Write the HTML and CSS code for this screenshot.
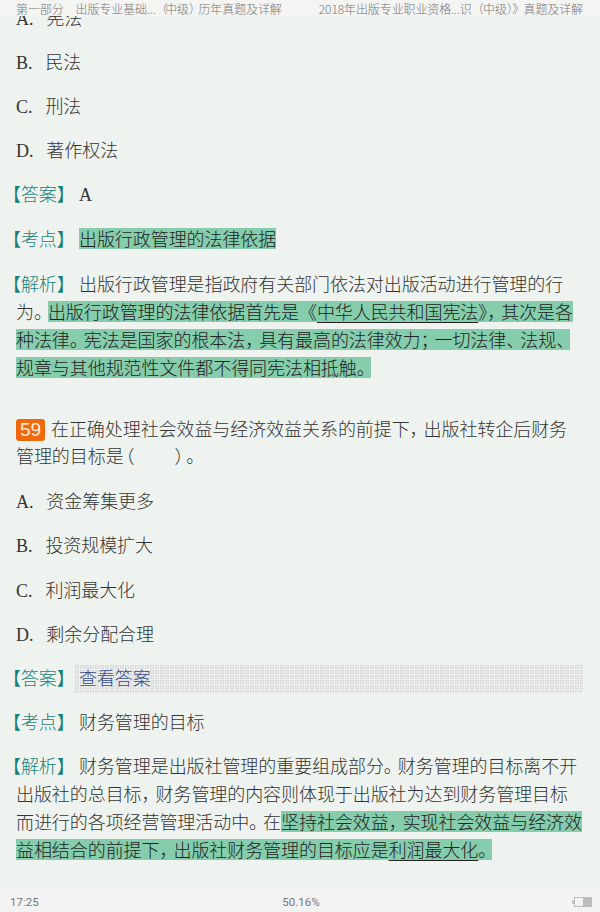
FILE: index.html
```html
<!DOCTYPE html>
<html lang="zh-CN">
<head>
<meta charset="utf-8">
<title>2018年出版专业职业资格考试</title>
<link rel="stylesheet" href="styles.css">
</head>
<body>
<header class="top">
  <span>第一部分　出版专业基础...<span class="pn">（</span>中级<span class="pn">）</span>历年真题及详解</span>
  <span>2018年出版专业职业资格...识<span class="pr">（</span>中级<span class="pr">）》</span>真题及详解</span>
</header>
<main class="page">
  <div class="clip">
    <p class="row"><span class="opt">A.</span>宪法</p>
    <p class="row"><span class="opt">B.</span>民法</p>
    <p class="row"><span class="opt">C.</span>刑法</p>
    <p class="row"><span class="opt">D.</span>著作权法</p>
    <p class="row wide"><span class="tag">【答案】</span><span class="lat">A</span></p>
    <p class="row wide"><span class="tag">【考点】</span><span class="hl">出版行政管理的法律依据</span></p>
    <div class="para">
      <span class="line"><span class="tag">【解析】</span>出版行政管理是指政府有关部门依法对出版活动进行管理的行</span>
      <span class="line">为<span class="p">。</span><span class="hl">出版行政管理的法律依据首先是《<u>中华人民共和国宪法</u>》<span class="p">，</span>其次是各</span></span>
      <span class="line"><span class="hl">种法律<span class="p">。</span>宪法是国家的根本法<span class="p">，</span>具有最高的法律效力<span class="p">；</span>一切法律<span class="p">、</span>法规<span class="p">、</span></span></span>
      <span class="line"><span class="hl">规章与其他规范性文件都不得同宪法相抵触<span class="p">。</span></span></span>
    </div>
    <div class="question">
      <span class="line qhead"><span class="num">59</span>在正确处理社会效益与经济效益关系的前提下<span class="p">，</span>出版社转企后财务</span>
      <span class="line">管理的目标是<span class="open">（</span>　　<span class="close">）</span>。</span>
    </div>
    <p class="row"><span class="opt">A.</span>资金筹集更多</p>
    <p class="row wide"><span class="opt">B.</span>投资规模扩大</p>
    <p class="row"><span class="opt">C.</span>利润最大化</p>
    <p class="row"><span class="opt">D.</span>剩余分配合理</p>
    <p class="row"><span class="tag">【答案】</span><span class="reveal"><span class="link">查看答案</span></span></p>
    <p class="row"><span class="tag">【考点】</span>财务管理的目标</p>
    <div class="para">
      <span class="line"><span class="tag">【解析】</span>财务管理是出版社管理的重要组成部分<span class="p">。</span>财务管理的目标离不开</span>
      <span class="line">出版社的总目标<span class="p">，</span>财务管理的内容则体现于出版社为达到财务管理目标</span>
      <span class="line">而进行的各项经营管理活动中<span class="p">。</span>在<span class="hl">坚持社会效益<span class="p">，</span>实现社会效益与经济效</span></span>
      <span class="line"><span class="hl">益相结合的前提下<span class="p">，</span>出版社财务管理的目标应是<u>利润最大化</u><span class="p">。</span></span></span>
    </div>
  </div>
</main>
<footer class="bottom">
  <span class="time">17:25</span>
  <span class="pct">50.16%</span>
  <svg class="batt" width="20" height="10" viewBox="0 0 20 10" aria-hidden="true">
    <rect x="0" y="3" width="2" height="4" fill="#c4c4c4"/>
    <rect x="2.5" y="0.5" width="17" height="9" fill="none" stroke="#bdbdbd"/>
    <rect x="11" y="1" width="8" height="8" fill="#bdbdbd"/>
  </svg>
</footer>
</body>
</html>
```
FILE: styles.css
```css
* { box-sizing: border-box; }
html, body { margin: 0; height: 100%; }
body {
  width: 600px;
  height: 912px;
  overflow: hidden;
  display: flex;
  flex-direction: column;
  background: #eef3ef;
  color: #333;
  font-family: "Noto Sans CJK SC", "Liberation Sans", sans-serif;
  font-weight: 300;
  font-size: 18px;
}
.top {
  flex: 0 0 16px;
  display: flex;
  justify-content: space-between;
  padding: 0 17px 0 16px;
  background: #f4f4f3;
  color: #777;
  font-size: 12px;
  letter-spacing: -0.1px;
  line-height: 18px;
  white-space: nowrap;
  overflow: hidden;
}
.pn { letter-spacing: -2.5px; }
.pr { letter-spacing: -0.7px; }
.page {
  flex: 1 1 auto;
  min-height: 0;
  overflow: hidden;
  padding: 0 16px;
}
.clip {
  margin-top: -13px;
  letter-spacing: -0.07px;
}
.row {
  margin: 0 0 16px;
  height: 28px;
  line-height: 28px;
  white-space: nowrap;
}
.row.wide { margin-bottom: 17px; }
.opt, .lat {
  font-family: "Liberation Serif", serif;
  font-weight: 400;
}
.opt { margin-right: 13px; }
.tag {
  display: inline-block;
  width: 76px;
  margin-left: -13px;
  color: #1a7f78;
  white-space: nowrap;
}
.p { letter-spacing: -4px; }
.open {
  margin-left: -7px;
  margin-right: 4px;
}
.close { margin-right: 3px; }
.hl {
  display: inline-block;
  height: 21px;
  line-height: 21px;
  background: #85cdac;
  color: #222;
}
.hl u {
  text-decoration: underline;
  text-decoration-color: #222;
  text-decoration-thickness: 1px;
  text-underline-offset: 3px;
}
.para + .question { margin-top: 33px; }
.line {
  display: block;
  height: 28px;
  line-height: 28px;
  white-space: nowrap;
}
.line.qhead { height: 27px; }
.question { margin-bottom: 17px; }
.num {
  display: inline-block;
  width: 29px;
  height: 22px;
  margin-right: 6px;
  border-radius: 3px;
  background: #f0690f;
  color: #ffeedd;
  font-family: "Liberation Sans", sans-serif;
  font-weight: 400;
  font-size: 19px;
  line-height: 22px;
  text-align: center;
}
.reveal {
  display: inline-block;
  vertical-align: top;
  width: 509px;
  height: 29px;
  margin-top: 1px;
  margin-left: -5px;
  padding-left: 5px;
  line-height: 26px;
  background-color: #dcdcdc;
  background-image:
    linear-gradient(to right, #eef3ef 1px, transparent 1px),
    linear-gradient(to bottom, #eef3ef 1px, transparent 1px),
    radial-gradient(circle at 3px 3px, #ececec 1.3px, transparent 1.4px);
  background-size: 5px 5px;
}
.link { color: #364a8a; }
.bottom {
  flex: 0 0 20px;
  display: grid;
  grid-template-columns: 1fr auto 1fr;
  align-items: center;
  padding: 0 8px 0 10px;
  background: #f3f3f3;
  color: #777;
  font-family: Roboto, sans-serif;
  font-weight: 400;
  font-size: 11.5px;
}
.batt { justify-self: end; }
```
